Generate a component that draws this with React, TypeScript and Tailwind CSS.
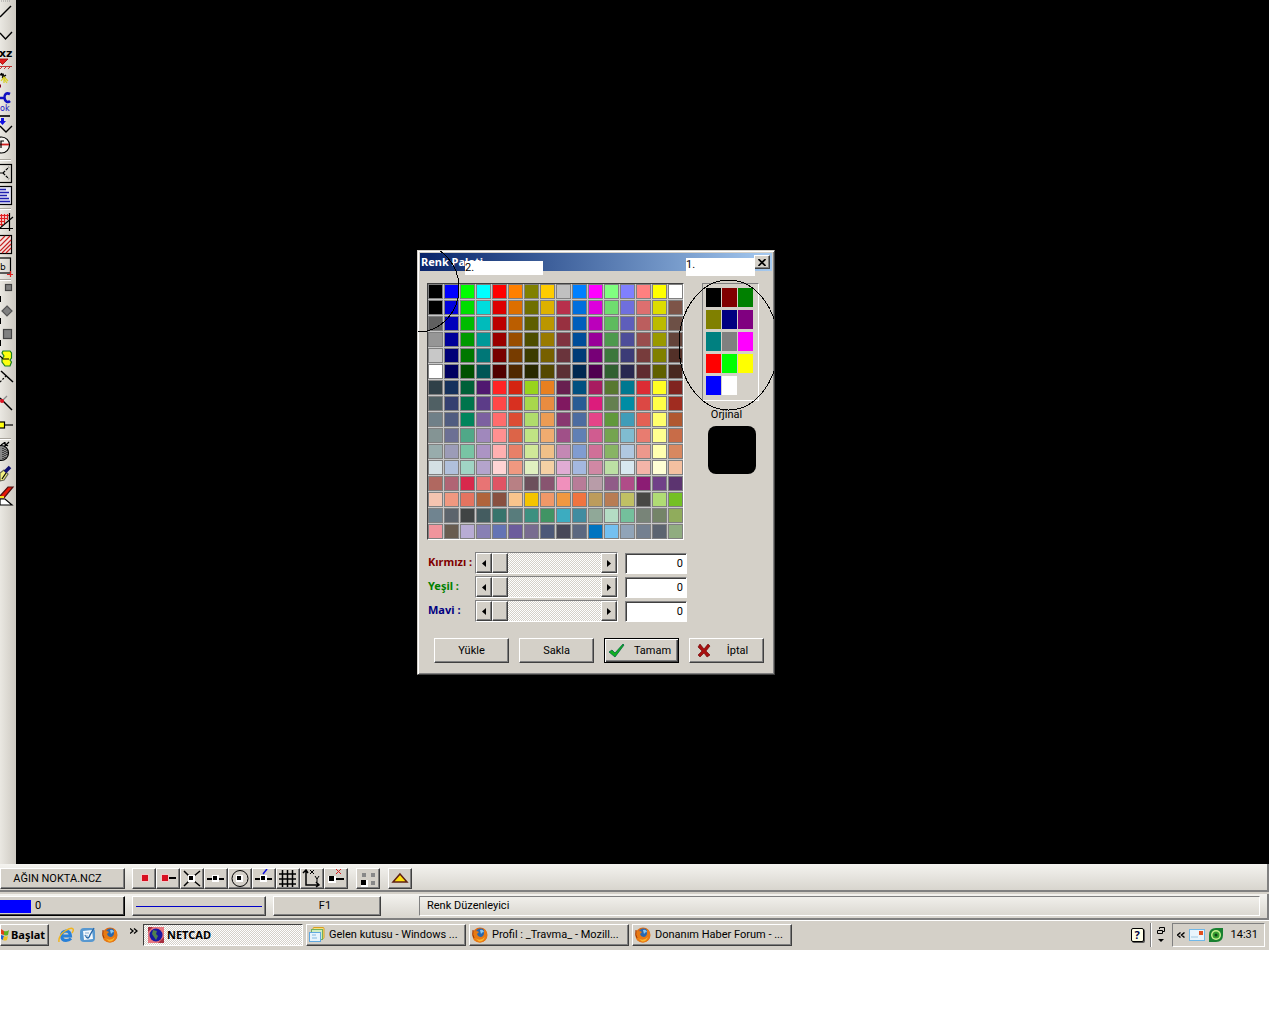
import React, { useState } from "react";

const raised =
  "border border-t-white border-l-white border-r-[#404040] border-b-[#404040] bg-[#d4d0c8] shadow-[inset_-1px_-1px_0_#808080]";
const sunken = "border border-t-[#808080] border-l-[#808080] border-r-white border-b-white";
const dither = "bg-[repeating-conic-gradient(#ffffff_0_25%,#d4d0c8_0_50%)] bg-[length:2px_2px]";
const bold = "font-['Noto_Sans',sans-serif] font-bold";

const PALETTE = [
  "000000 0000ff 00ff00 00ffff ff0000 ff8000 808000 ffcc00 c0c0c0 0080ff ff00ff 80ff80 8080ff ff8080 ffff00 ffffff",
  "000000 0000dd 00dd00 00dddd dd0000 dd6f00 6f6f00 ddb100 b8304c 006fdd dd00dd 6fdd6f 6f6fdd dd6f6f dddd00 7d5448",
  "606060 0000bb 00bb00 00bbbb bb0000 bb5e00 5e5e00 bb9600 983040 005ebb bb00bb 5ebb5e 5e5ebb bb5e5e bbbb00 6d5046",
  "969696 000099 009900 009999 990000 994d00 4d4d00 997a00 803440 004d99 990099 4d994d 4d4d99 994d4d 999900 63433a",
  "c8c8c8 000077 007700 007777 770000 773c00 3c3c00 776000 6a343c 003c77 770077 3c773c 3c3c77 773c3c 808000 533028",
  "ffffff 000060 005000 005555 500000 502800 282800 554800 5c3034 002850 500050 306030 282850 602c30 606000 482820",
  "304048 14305c 006038 501870 ff2424 d42410 98d41c e88020 682050 005080 a81c60 587830 007890 dc2c34 ffff24 802420",
  "506064 344070 00744c 5c3c88 ff4848 d83020 a8d84c e88c40 801860 285c94 dc1c7c 648050 008ca4 dc4844 ffff48 a02c20",
  "708088 505c80 00845c 7c60a0 ff6c6c dc4c34 b0dc6c ec9c54 883870 4c6ca0 e44488 60983c 409cb8 e46054 ffff6c b05830",
  "849494 6c7094 50a888 a088bc ff9090 dc6448 c0e484 f0ac70 a05088 6080b4 d05c90 74a450 80bcd0 e87c70 ffff90 c86c48",
  "98acac 9c9cb8 78c4a4 ac94c4 ffb0b0 e88068 d0e898 f0c088 c488b4 809cd0 d07098 88b464 b0c8e0 ec988c ffffb0 d88860",
  "d4e0e4 b0c0dc a0d4c4 b4a4cc ffd4d4 f09880 e0f0c0 f4d0a4 e0acd4 a4b8e0 d088a4 bce0a4 d8e8f0 f4b4a8 ffffd4 f4c0a0",
  "b06860 b06474 d8284c e87474 e05464 b88084 6c505c 885470 f090bc b87c98 b89ca8 905c88 b04c88 8c1c74 704088 5c3470",
  "f4c4b0 f09880 e47460 b0643c 885040 f8c48c f4c400 f09868 f09840 f07440 bc9c5c b87c54 c0c064 484844 b0dc74 74c024",
  "708490 5c646c 404444 445c60 38746c 587c7c 3c9080 409464 3cacc0 408ca0 90a898 b4dcc4 74c09c 788478 748468 90ac5c",
  "f0949c 685c50 b8acd4 8880b4 6474b4 6c5c9c 786c90 4c5878 484858 5c6880 0074c0 74c0f0 90a4b8 748090 5c6470 90ac80",
].map((r) => r.split(" "));

const CUSTOM = [
  "000000", "800000", "008000", "808000", "000080", "800080", "008080",
  "808080", "ff00ff", "ff0000", "00ff00", "ffff00", "0000ff", "ffffff",
];

function Slot({ label, children }: { label: string; children: React.ReactNode }) {
  return (
    <button aria-label={label} className="block h-[22px] w-4 shrink-0">
      <svg viewBox="0 0 16 22" className="h-[22px] w-4 overflow-visible" fill="none" stroke="#000" strokeWidth="1.2">
        {children}
      </svg>
    </button>
  );
}

function Rule() {
  return (
    <div className="flex h-[5px] shrink-0 items-center">
      <div className="h-[2px] w-[11px] border-t border-[#a8a49c] bg-white" />
    </div>
  );
}

function SideTools() {
  return (
    <nav aria-label="Çizim" className="flex w-4 shrink-0 flex-col overflow-hidden bg-linear-to-r from-[#eae8e2] to-[#cdc9c1] pt-[3px]">
      <Slot label="Çizgi"><path d="M0 14L11 3" strokeWidth="1.5" /><path d="M1 -2H10" stroke="#999" strokeDasharray="1 1" /></Slot>
      <Slot label="Çoklu çizgi"><path d="M0 8L5.500 14L12 7" strokeWidth="1.4" /></Slot>
      <Slot label="Kot">
        <text x="-1" y="10" fontFamily="DejaVu Sans" fontWeight="bold" fontSize="11" fill="#000" stroke="none">xz</text>
        <path d="M-3 12H8L2.500 17.500Z" fill="#e02020" stroke="#900" strokeWidth=".8" />
        <path d="M0 19.500H12M0 22L2 20M4 22L6 20M8 22L10 20" stroke="#c02020" strokeWidth=".9" />
      </Slot>
      <Slot label="Nokta">
        <path d="M0 6L3 5L5 9M2 9L6 6M1 4L3 8" /><path d="M4 14V8M1 12L4 8L8 12M4 10L7 14" stroke="#d8d020" /><path d="M0 17H1" stroke="#800020" strokeWidth="3" />
      </Slot>
      <Slot label="Tamam">
        <path d="M0 7H4M10 3C6 1 4 4 4.500 7C5 11 8 12 10 10" stroke="#1010c0" strokeWidth="2.600" />
        <text x="0" y="20" fontFamily="DejaVu Sans" fontSize="8" fill="#1010c0" stroke="none">ok</text>
      </Slot>
      <Slot label="Taşı">
        <path d="M0 3H10" strokeWidth="1.600" /><path d="M1 5h3v3h2L2.500 12L-1 8h2Z" fill="#1010e0" stroke="none" /><path d="M0 13L6 19L12 13" strokeWidth="1.400" />
      </Slot>
      <Slot label="Daire"><circle cx="1.500" cy="10" r="8" fill="#f4f2ee" /><path d="M0 9.500H9" stroke="#d02020" strokeWidth="1.800" /><path d="M1 13V6H4" /></Slot>
      <Rule />
      <Slot label="Açı"><rect x="-4" y="2.500" width="15.500" height="18" /><path d="M0 11H3M3 11L9 5M3 11L9 17" strokeDasharray="3 1" /></Slot>
      <Slot label="Metin"><rect x="-4" y="2.500" width="15.500" height="18" fill="#e4e4f4" /><path d="M0 5.500H6M0 8.500H9M0 11.500H7M0 14.500H9M0 17.500H10" stroke="#2020b0" strokeWidth="1.400" /></Slot>
      <Rule />
      <Slot label="Izgara">
        <path d="M0 3H9L0 13Z" fill="#f8d0d0" stroke="none" /><path d="M0 4.500H9M0 7.500H8M0 10.500H5M0 13.500H3M1.500 3V15M4.500 3V13M7.500 3V9" stroke="#e02020" />
        <path d="M9.500 2V20M0 17.500H13M0 17L13 6" />
      </Slot>
      <Slot label="Tarama"><rect x="-4" y="2.500" width="15.500" height="18" fill="#f4e4e0" /><path d="M0 8L5 3M0 13L10 3M0 18L11 7M2 20L11 11M6 20L11 15" stroke="#c82020" /></Slot>
      <Slot label="Blok">
        <rect x="-4" y="3" width="14.500" height="15" /><text x="0" y="15" fontFamily="DejaVu Sans" fontSize="9" fill="#000" stroke="none">b</text><path d="M7 19.500H13M10.500 16V22" stroke="#e02020" />
      </Slot>
      <Rule />
      <Slot label="Küçük kare"><rect x="5.500" y="2.500" width="6" height="6" fill="#808080" stroke="#444" /><path d="M0 14V20" strokeWidth="2" /></Slot>
      <Slot label="Eşkenar"><path d="M7 2L12 7L7 12L2 7Z" fill="#808080" stroke="#555" /><path d="M0 14V20" strokeWidth="2" /></Slot>
      <Slot label="Kare"><rect x="3.500" y="3.500" width="8" height="9" fill="#808080" stroke="#444" /><path d="M0 14V20" strokeWidth="2" /></Slot>
      <Slot label="Hacim"><path d="M3 3H10L11.500 5V10L10 12L11.500 14L10 18H5L2 14V11L4 8L2 5Z" fill="#ffff10" stroke="#188020" /><path d="M0 8L3 11H9" /></Slot>
      <Slot label="Kes"><path d="M1 1L13 12" strokeWidth="1.500" /><path d="M0 12L6 6" strokeDasharray="2 1.500" /></Slot>
      <Slot label="Kesişim"><path d="M0 6L12 18" strokeWidth="1.500" /><path d="M1 10L7 4" stroke="#888" /><circle cx="2" cy="9" r="2" fill="#e01020" stroke="none" /></Slot>
      <Slot label="Düğüm"><rect x="-3" y="8" width="7.500" height="6" fill="#ffff10" /><path d="M4 11H13" /></Slot>
      <Rule />
      <Slot label="Küre">
        <circle cx="1" cy="12" r="7.500" fill="#888" /><path d="M3 7V18M5 8V17M7 9V15" stroke="#111" strokeDasharray="1 1" /><path d="M1 4L4 2L8 5M5 1V5L9 1" />
      </Slot>
      <Slot label="Kalem"><path d="M0 10L4 7L8 11L4 17L0 18Z" fill="#f0f080" stroke="#665" /><path d="M2 16L6 10" /><path d="M5 9L10 4" stroke="#101070" strokeWidth="3.500" /></Slot>
      <Slot label="Sil"><path d="M0 11L8 2H13L4 13H0Z" fill="#e81808" stroke="#501010" /><path d="M0 12H4" stroke="#f8e020" strokeWidth="2" /><path d="M0 14H5L12 20H0Z" fill="#fff" /></Slot>
    </nav>
  );
}

function ColorRow({ id, name, color }: { id: string; name: string; color: string }) {
  const [v, setV] = useState(0);
  return (
    <div className="flex h-[22px] items-center">
      <label htmlFor={id} className={"w-[47px] shrink-0 pb-[2px] whitespace-nowrap " + bold + " " + color}>{name} :</label>
      <div className={"flex h-[22px] w-[143px] shrink-0 " + sunken}>
        <button aria-label={name + " azalt"} onClick={() => setV(Math.max(0, v - 1))} className={"flex w-4 items-center justify-center " + raised}>
          <svg viewBox="0 0 4 7" className="h-[7px] w-1"><path d="M4 0V7L0 3.500Z" /></svg>
        </button>
        <input
          id={id}
          type="range"
          min={0}
          max={255}
          value={v}
          onChange={(e) => setV(+e.target.value)}
          className={
            "m-0 h-full min-w-0 flex-1 appearance-none [&::-webkit-slider-thumb]:h-5 [&::-webkit-slider-thumb]:w-4 [&::-webkit-slider-thumb]:appearance-none [&::-webkit-slider-thumb]:border [&::-webkit-slider-thumb]:border-t-white [&::-webkit-slider-thumb]:border-l-white [&::-webkit-slider-thumb]:border-r-[#404040] [&::-webkit-slider-thumb]:border-b-[#404040] [&::-webkit-slider-thumb]:bg-[#d4d0c8] [&::-webkit-slider-thumb]:shadow-[inset_-1px_-1px_0_#808080] " +
            dither
          }
        />
        <button aria-label={name + " artır"} onClick={() => setV(Math.min(255, v + 1))} className={"flex w-4 items-center justify-center " + raised}>
          <svg viewBox="0 0 4 7" className="h-[7px] w-1"><path d="M0 0V7L4 3.500Z" /></svg>
        </button>
      </div>
      <input
        aria-label={name + " değeri"}
        value={v}
        onChange={(e) => setV(+e.target.value || 0)}
        className={"ml-[7px] h-[21px] w-[62px] bg-white pr-[3px] text-right shadow-[inset_1px_1px_0_#404040] " + sunken}
      />
    </div>
  );
}

function Dialog() {
  const btn = "flex h-[25px] w-[75px] items-center justify-center ";
  return (
    <section
      aria-label="Renk Paleti"
      className="absolute top-[250px] left-[401px] w-[358px] overflow-hidden border border-t-[#d4d0c8] border-l-[#d4d0c8] border-r-[#404040] border-b-[#404040] bg-[#d4d0c8] shadow-[inset_1px_1px_0_#fff,inset_-1px_-1px_0_#808080]"
    >
      <div className="p-[2px]">
        <header className="flex h-[18px] items-center justify-between bg-linear-to-r from-[#0a246a] to-[#a6caf0] pr-[2px] pl-px">
          <h1 className={"text-white " + bold}>Renk Paleti</h1>
          <button aria-label="Kapat" className={"flex h-[14px] w-4 items-center justify-center " + raised}>
            <svg viewBox="0 0 8 7" className="h-[7px] w-2" stroke="#000" strokeWidth="1.600"><path d="M.500 0L7.500 7M7.500 0L.500 7" /></svg>
          </button>
        </header>
        <div className="flex pt-[12px] pl-[7px]">
          <div>
            <div className="grid w-[257px] grid-cols-[repeat(16,15px)] gap-px border border-t-[#404040] border-l-[#404040] border-r-white border-b-white bg-[#c8c8c8]">
              {PALETTE.flat().map((c, i) => (
                <button key={i} aria-label={"#" + c} className="size-[15px] border border-[#808080]" style={{ backgroundColor: "#" + c }} />
              ))}
            </div>
            <div className="mt-3 flex flex-col gap-[2px] pl-px">
              <ColorRow id="red" name="Kırmızı" color="text-[#800000]" />
              <ColorRow id="green" name="Yeşil" color="text-[#008000]" />
              <ColorRow id="blue" name="Mavi" color="text-[#000080]" />
            </div>
          </div>
          <div className="ml-[15px] flex flex-col items-center">
            <div className={"grid h-[118px] w-[57px] grid-cols-[repeat(3,15px)] content-start gap-x-px gap-y-[3px] pt-1 pl-[3px] " + sunken}>
              {CUSTOM.map((c, i) => (
                <button key={i} aria-label={"#" + c} className="h-[19px] w-[15px]" style={{ backgroundColor: "#" + c }} />
              ))}
            </div>
            <p className="mt-[6px] h-4 pr-2 leading-4">Orjinal</p>
            <div className="mt-[3px] ml-[3px] size-12 rounded-[8px] bg-black" />
          </div>
        </div>
        <div className="flex gap-[10px] pt-4 pb-[9px] pl-[14px]">
          <button className={btn + raised}>Yükle</button>
          <button className={btn + raised}>Sakla</button>
          <button className={btn + "gap-[9px] border border-black bg-[#d4d0c8] pr-1 shadow-[inset_1px_1px_0_#fff,inset_-1px_-1px_0_#404040,inset_-2px_-2px_0_#808080]"}>
            <svg viewBox="0 0 17 15" className="h-[15px] w-[17px]"><path d="M1 9L4 7L7 10L15 1L16 2L7 14Z" fill="#10b020" stroke="#064" strokeWidth=".8" /></svg>
            Tamam
          </button>
          <button className={btn + "gap-4 pr-2 " + raised}>
            <svg viewBox="0 0 14 15" className="h-[15px] w-[14px]"><path d="M3 1L7 6L11 1L13 3L9 8L13 12L10 14L7 10L3 14L1 12L5 8L1 4Z" fill="#a81010" stroke="#600" strokeWidth=".6" /></svg>
            İptal
          </button>
        </div>
      </div>
      <svg viewBox="0 0 356 423" className="pointer-events-none absolute inset-0 h-[423px] w-[356px]" fill="none" stroke="#000" shapeRendering="crispEdges">
        <ellipse cx="310.500" cy="94" rx="49.500" ry="65" />
        <ellipse cx="0" cy="37" rx="41" ry="44" />
      </svg>
      <p className="absolute top-[10px] left-[47px] h-[14px] w-[78px] bg-white leading-[14px]">2.</p>
      <p className="absolute top-[7px] left-[268px] h-[18px] w-[69px] bg-white leading-[14px]">1.</p>
    </section>
  );
}

const node = <><rect x="8" y="7" width="7" height="7" fill="#fff" stroke="none" /><rect x="9" y="8" width="4" height="4" fill="#000" stroke="none" /></>;
const redNode = (x: number) => <><rect x={x} y="6" width="8" height="8" fill="#f0c8c8" stroke="none" /><rect x={x + 1} y="7" width="6" height="6" fill="#d81020" stroke="none" /></>;

const SNAPS: [string, React.ReactNode][] = [
  ["Nokta", redNode(9)],
  ["Uç", <>{redNode(5)}<path d="M13 10H20" strokeWidth="2" /></>],
  ["Kesişim", <><path d="M4 3L9 8M20 3L14 8M4 18L9 13M20 18L14 13" strokeWidth="1.500" />{node}</>],
  ["Orta", <><path d="M3 11H8M15 11H20" strokeWidth="2" />{node}</>],
  ["Merkez", <><circle cx="12" cy="10.500" r="8" />{node}</>],
  ["En yakın", <><path d="M3 11H8M15 11H20" strokeWidth="2" /><path d="M11 6L15 1" stroke="#1010e0" strokeWidth="1.500" />{node}</>],
  ["Izgara", <path d="M3 6H20M3 11H20M3 16H20M6.500 2V19M11.500 2V19M16.500 2V19" strokeWidth="1.500" />],
  ["Koordinat", <><path d="M6 2V17H19M3 5L6 2L8 5M16 14L19 17L16 19" strokeWidth="1.500" /><path d="M10 2L14 6M14 2L10 6M15 8L17 11L19 8M17 11V14" /></>],
  ["İptal", <><rect x="4" y="8" width="8" height="7" fill="#fff" stroke="none" /><rect x="5" y="8" width="5" height="5" fill="#000" stroke="none" /><path d="M12 11H20" strokeWidth="2" /><path d="M12 1L17 6M17 1L12 6" stroke="#d82020" /></>],
];

function ToolButton({ label, children }: { label: string; children: React.ReactNode }) {
  return (
    <button aria-label={label} className={"h-[21px] w-6 " + raised}>
      <svg viewBox="1 1 22 19" className="h-[19px] w-[22px]" fill="none" stroke="#000">{children}</svg>
    </button>
  );
}

function Firefox() {
  return (
    <svg viewBox="0 0 16 16" className="size-4 shrink-0">
      <circle cx="8" cy="8" r="7.500" fill="#e06a10" />
      <circle cx="8.500" cy="6.500" r="5" fill="#2868b0" />
      <path d="M8 3Q11 2 12 5Q10 5 9 7Z" fill="#8cc8f0" />
      <path d="M1 3Q2 5 5 4L7 5L5 7Q6 10 9 10Q12 9 12 6Q13 3 11 1Q15 3 15 8Q15 15 8 15.500Q1 15 .500 9Z" fill="#e87a14" />
      <path d="M3 11Q8 15 13 10Q11 15 7 14.500Z" fill="#fbb830" />
      <path d="M1 3Q0 8 2 11" stroke="#a03808" fill="none" />
    </svg>
  );
}

function Task({ icon, text }: { icon: React.ReactNode; text: string }) {
  return <button className={"flex h-[22px] w-40 items-center gap-1 overflow-hidden pl-[2px] whitespace-nowrap " + raised}>{icon}{text}</button>;
}

export default function App() {
  const bar = "flex shrink-0 items-center border-b-2 border-[#808080] bg-linear-to-b from-[#f4f3ef] to-[#d8d5ce]";
  return (
    <div className="flex h-screen min-h-[760px] flex-col overflow-hidden bg-white pr-[11px] pb-[74px] font-[Roboto,sans-serif] text-[11px] leading-[14px] text-black">
      <div className="flex min-h-0 flex-1">
        <SideTools />
        <main className="relative min-w-0 flex-1 overflow-hidden bg-black"><Dialog /></main>
      </div>

      <div className={"h-7 border-r-2 pt-[3px] " + bar}>
        <button className={"h-[21px] w-[125px] pr-[10px] " + raised}>AĞIN NOKTA.NCZ</button>
        <div className="ml-[7px] flex">
          {SNAPS.map(([n, i]) => <ToolButton key={n} label={n}>{i}</ToolButton>)}
        </div>
        <div className="ml-2 flex gap-2">
          <ToolButton label="Noktalar">
            <g stroke="none" fill="#888"><rect x="6" y="5" width="4" height="4" /><rect x="15" y="5" width="4" height="4" /><rect x="15" y="13" width="4" height="4" /><rect x="5" y="12" width="7" height="7" fill="#fff" /><rect x="5" y="12" width="5" height="5" fill="#000" /></g>
          </ToolButton>
          <ToolButton label="Yukarı"><path d="M12 6L19 14H5Z" fill="#ffe010" stroke="#602010" strokeWidth="1.500" /></ToolButton>
        </div>
      </div>
      <div className="h-[2px] shrink-0 bg-[#d4d0c8]" />
      <div className={"h-[26px] border-r-2 pr-[7px] " + bar}>
        <button className="flex h-5 w-[125px] items-center border border-t-white border-l-0 border-r-black border-b-black bg-[#d4d0c8] shadow-[inset_-1px_-1px_0_#404040]">
          <span className="mr-1 h-[13px] w-[31px] bg-[#0000ff]" />0
        </button>
        <button aria-label="Çizgi tipi" className={"ml-[7px] flex h-5 w-[134px] items-center px-[3px] " + raised}>
          <span className="h-px w-full bg-[#0000c8]" />
        </button>
        <button className={"ml-[7px] h-5 w-[108px] pr-1 " + raised}>F1</button>
        <p className={"ml-[38px] flex h-5 flex-1 items-center pl-[7px] " + sunken}>Renk Düzenleyici</p>
      </div>

      <footer className="flex h-[30px] shrink-0 items-center border-t border-white bg-[#d4d0c8] pb-px">
        <button className={"flex h-[22px] w-[49px] items-center gap-[2px] " + bold + " " + raised}>
          <svg viewBox="0 0 8 14" className="h-[14px] w-2 shrink-0"><path d="M0 1L3 3V7L0 6Z" fill="#e04018" /><path d="M3 3Q6 4 8 2L7 7Q5 8 3 7Z" fill="#60b020" /><path d="M0 7L3 8L2 12L0 11Z" fill="#2060d0" /><path d="M3 8Q5 9 7 8L6 12Q4 13 2 12Z" fill="#f0c020" /></svg>
          Başlat
        </button>
        <div className="ml-[9px] flex items-center gap-[6px]">
          <button aria-label="Internet Explorer">
            <svg viewBox="0 0 16 16" className="size-4" fill="none"><path d="M4 9H12.500Q12 4 8 4Q3.500 4.500 3.500 9Q4 13.500 8 13.500Q11 13.500 13 11.500" stroke="#2880d8" strokeWidth="3" /><path d="M1 15Q0 9 7 4Q13 0 15 2Q16 3 14 6" stroke="#f0b420" strokeWidth="1.500" /></svg>
          </button>
          <button aria-label="Masaüstü">
            <svg viewBox="0 0 16 16" className="size-4"><rect x="0" y="1" width="15" height="14" rx="4" fill="#5898d0" /><path d="M3 4L12 3L13 12L4 13Z" fill="#f4f8fc" /><path d="M5 8Q8 14 10 8L14 1" stroke="#2868a8" fill="none" strokeWidth="1.400" /><path d="M5 6H9M5 9H8" stroke="#80a8d0" /></svg>
          </button>
          <button aria-label="Firefox"><Firefox /></button>
        </div>
        <button aria-label="Daha fazla" className="ml-3 pb-2">
          <svg viewBox="0 0 8 6" className="h-[6px] w-2" fill="none" stroke="#000" strokeWidth="1.300"><path d="M0 .500L3 3L0 5.500M4 .500L7 3L4 5.500" /></svg>
        </button>
        <div className="ml-[5px] flex gap-[3px]">
          <button className={"flex h-[22px] w-40 items-center gap-[3px] border border-t-[#404040] border-l-[#404040] border-r-white border-b-white pl-1 " + bold + " " + dither}>
            <svg viewBox="0 0 16 16" className="size-4"><rect width="16" height="16" fill="#e87880" /><path d="M0 0H5L0 5ZM16 16V10L10 16Z" fill="#a83040" /><circle cx="8" cy="8" r="6.500" fill="#1818a0" /><path d="M5 3L9 4L8 7L10 9L8 13L6 10L4 7Z" fill="#508050" /></svg>
            NETCAD
          </button>
          <Task
            text="Gelen kutusu - Windows ..."
            icon={<svg viewBox="0 0 16 16" className="size-4 shrink-0"><rect x="4" y=".500" width="11" height="11" rx="1" fill="#f8e080" stroke="#d8a020" /><rect x="2.500" y="2.500" width="11" height="10" fill="#d0ecc0" stroke="#70b060" /><rect x=".500" y="5.500" width="11" height="9" fill="#e8f4fc" stroke="#60a8e0" /><path d="M3 8H7M3 11H8" stroke="#80b8e0" /></svg>}
          />
          <Task text="Profil : _Travma_ - Mozill..." icon={<Firefox />} />
          <Task text="Donanım Haber Forum - ..." icon={<Firefox />} />
        </div>
        <div className="ml-auto flex items-center">
          <button aria-label="Yardım" className={"mr-[6px] flex h-[14px] w-[13px] items-center justify-center rounded-[2px] border border-black bg-[#ffffe8] text-[#000040] shadow-[1px_1px_0_#555] " + bold}>?</button>
          <div className="h-[24px] w-[2px] border-l border-[#808080] bg-white" />
          <button aria-label="Dil" className="mx-[5px]">
            <svg viewBox="0 0 8 16" className="h-4 w-2" fill="none" stroke="#000"><path d="M2.500 2V.500H7.500V4.500H6M.500 3.500H5.500V6.500H.500Z" /><path d="M1 12H7L4 15Z" fill="#000" stroke="none" /></svg>
          </button>
          <div className={"mr-1 ml-[2px] flex h-6 items-center pr-[6px] pl-1 " + sunken}>
            <button aria-label="Gizli simgeler" className="mr-1">
              <svg viewBox="0 0 8 6" className="h-[6px] w-2" fill="none" stroke="#000" strokeWidth="1.400"><path d="M3.500 .500L.500 3L3.500 5.500M7.500 .500L4.500 3L7.500 5.500" /></svg>
            </button>
            <svg viewBox="0 0 16 12" className="h-3 w-4"><rect x=".500" y=".500" width="15" height="11" fill="#e8f4fc" stroke="#70b8e8" /><rect x="10" y="2" width="4" height="4" fill="#e05020" /><path d="M2 8H9" stroke="#a0c8e0" /></svg>
            <svg viewBox="0 0 16 16" className="ml-[3px] size-4"><path d="M1 8Q1 1 8 1H15V8Q15 15 8 15H1Z" fill="#188030" /><circle cx="8" cy="8" r="5" fill="#c8f090" /><circle cx="8" cy="8" r="3.500" fill="#38a030" /><circle cx="8" cy="8" r="1.500" fill="#104018" /></svg>
            <time className="ml-[7px]">14:31</time>
          </div>
        </div>
      </footer>
    </div>
  );
}
